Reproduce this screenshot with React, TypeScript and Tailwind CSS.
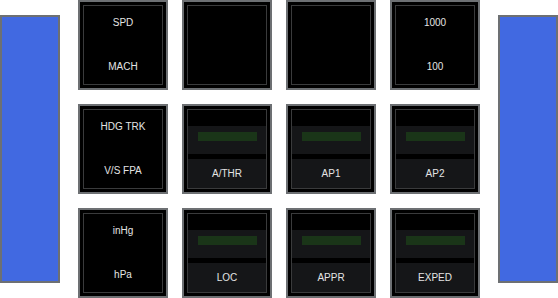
const font = { fontFamily: '"Liberation Sans", Arial, sans-serif' }

type Btn =
  | { kind: 'text'; top: string; bottom: string }
  | { kind: 'blank' }
  | { kind: 'lit'; label: string }

const buttons: Btn[] = [
  { kind: 'text', top: 'SPD', bottom: 'MACH' },
  { kind: 'blank' },
  { kind: 'blank' },
  { kind: 'text', top: '1000', bottom: '100' },
  { kind: 'text', top: 'HDG TRK', bottom: 'V/S FPA' },
  { kind: 'lit', label: 'A/THR' },
  { kind: 'lit', label: 'AP1' },
  { kind: 'lit', label: 'AP2' },
  { kind: 'text', top: 'inHg', bottom: 'hPa' },
  { kind: 'lit', label: 'LOC' },
  { kind: 'lit', label: 'APPR' },
  { kind: 'lit', label: 'EXPED' },
]

function SidePanel() {
  return <div className="w-[60px] h-[268px] bg-[#4169e1] border-2 border-[#6d7073]" />
}

function FcuButton({ btn }: { btn: Btn }) {
  return (
    <div className="w-[90px] h-[90px] bg-black border-2 border-[#6d7073] p-[3px]">
      <div className="h-full border border-[#3a3b3c] flex flex-col">
        {btn.kind === 'text' && (
          <div className="h-full flex flex-col items-center justify-between pt-[11px] pb-[11px] text-[10px] leading-[12px] text-[#e4e4e4]">
            <span>{btn.top}</span>
            <span>{btn.bottom}</span>
          </div>
        )}
        {btn.kind === 'lit' && (
          <>
            <div className="h-[16px]" />
            <div className="h-[28px] bg-[#151618] flex justify-center pt-[6px] pl-[1px]">
              <div className="w-[59px] h-[9px] bg-[#1a3518]" />
            </div>
            <div className="h-[5px]" />
            <div className="flex-1 bg-[#151618] flex items-center justify-center text-[10px] text-[#e4e4e4]">
              {btn.label}
            </div>
          </>
        )}
      </div>
    </div>
  )
}

export default function App() {
  return (
    <div className="w-[558px] h-[298px] bg-white flex items-center justify-between" style={font}>
      <SidePanel />
      <div className="grid grid-cols-4 gap-[14px]">
        {buttons.map((b, i) => (
          <FcuButton key={i} btn={b} />
        ))}
      </div>
      <SidePanel />
    </div>
  )
}
